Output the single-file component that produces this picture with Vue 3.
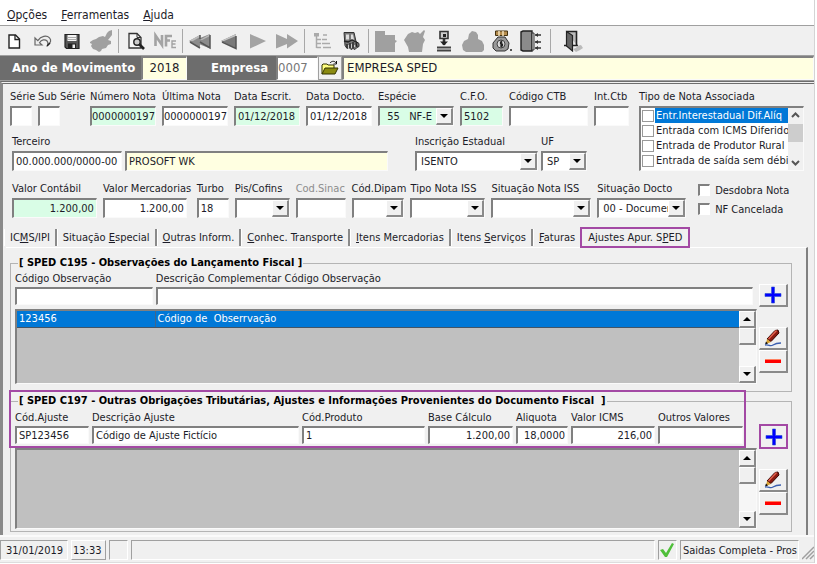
<script setup>
import { ref } from 'vue'

const menus = [['', 'O', 'pções'], ['', 'F', 'erramentas'], ['', 'A', 'juda']]

const tabs = [
  ['IC', 'M', 'S/IPI'],
  ['Situação ', 'E', 'special'],
  ['', 'O', 'utras Inform.'],
  ['', 'C', 'onhec. Transporte'],
  ['', 'I', 'tens Mercadorias'],
  ['Itens ', 'S', 'erviços'],
  ['', 'F', 'aturas'],
  ['Ajustes Apur. S', 'P', 'ED'],
]
const activeTab = ref(7)

const row1 = [
  { id: 'serie', label: 'Série', value: '' },
  { id: 'subserie', label: 'Sub Série', value: '', cls: 'gap-wide' },
  { id: 'numero', label: 'Número Nota', value: '0000000197', cls: 'green tight' },
  { id: 'ultima', label: 'Última Nota', value: '0000000197', cls: 'tight' },
  { id: 'escrit', label: 'Data Escrit.', value: '01/12/2018', cls: 'green' },
  { id: 'docto', label: 'Data Docto.', value: '01/12/2018' },
  { id: 'especie', label: 'Espécie', value: '\u00a055\u00a0\u00a0\u00a0NF-E', combo: true, cls: 'green' },
  { id: 'cfo', label: 'C.F.O.', value: '5102', cls: 'green' },
  { id: 'ctb', label: 'Código CTB', value: '' },
  { id: 'intctb', label: 'Int.Ctb', value: '' },
]
const row3 = [
  { id: 'contabil', label: 'Valor Contábil', value: '1.200,00', cls: 'green right' },
  { id: 'mercadorias', label: 'Valor Mercadorias', value: '1.200,00', cls: 'right gap-small' },
  { id: 'turbo', label: 'Turbo', value: '18' },
  { id: 'pis', label: 'Pis/Cofins', value: '', combo: true },
  { id: 'sinac', label: 'Cod.Sinac', value: '', cls: 'disabled' },
  { id: 'dipam', label: 'Cód.Dipam', value: '', combo: true },
  { id: 'tipoiss', label: 'Tipo Nota ISS', value: '', combo: true },
  { id: 'sitiss', label: 'Situação Nota ISS', value: '', combo: true },
  { id: 'sitdocto', label: 'Situação Docto', value: '00 - Documento', combo: true },
]
const noteTypes = ref([
  { text: 'Entr.Interestadual Dif.Alíq', on: false },
  { text: 'Entrada com ICMS Diferido', on: false },
  { text: 'Entrada de Produtor Rural', on: false },
  { text: 'Entrada de saída sem débi', on: false },
])
const adjust = [
  { id: 'codajuste', label: 'Cód.Ajuste', value: 'SP123456' },
  { id: 'descajuste', label: 'Descrição Ajuste', value: 'Código de Ajuste Fictício' },
  { id: 'codproduto', label: 'Cód.Produto', value: '1' },
  { id: 'base', label: 'Base Cálculo', value: '1.200,00', cls: 'right' },
  { id: 'aliquota', label: 'Aliquota', value: '18,0000', cls: 'right' },
  { id: 'icms', label: 'Valor ICMS', value: '216,00', cls: 'right' },
  { id: 'outros', label: 'Outros Valores', value: '', cls: 'right' },
]
</script>

<template>
  <div class="window">
    <nav class="menubar">
      <a v-for="m in menus" :key="m[1]" href="#">{{ m[0] }}<u>{{ m[1] }}</u>{{ m[2] }}</a>
    </nav>

    <div class="toolbar" role="toolbar" aria-label="Ferramentas">
      <button aria-label="Novo"><svg width="22" height="22" viewBox="0 0 22 22"><path d="M6 5h6.500l4 4v9H6z" fill="#fff" stroke="#222" stroke-width="1.400"/><path d="M12 5v4.500h4.500" fill="none" stroke="#222" stroke-width="1.300"/></svg></button>
      <button aria-label="Desfazer"><svg width="22" height="22" viewBox="0 0 22 22"><path d="M3 8v7h7l-2.500-2.300c2-3.200 5.600-3.700 7.600-1.700 1 1 1.100 2.400.4 4.500 3.500-2.600 4-5.700 2-7.700C14.600 5 9 6 5.800 10.600z" fill="#eee" stroke="#666" stroke-width="1.200"/><path d="M15 16l3-3" stroke="#222" stroke-width="1.300"/></svg></button>
      <button aria-label="Salvar"><svg width="22" height="22" viewBox="0 0 22 22"><path d="M4 4.500h14v14H5.500L4 17z" fill="#555" stroke="#222" stroke-width="1.200"/><path d="M6.500 5h9v6h-9z" fill="#f4f4f4"/><path d="M7 7.500h8M7 9.500h8" stroke="#aaa"/><path d="M7 13.500h8v5H7z" fill="#222"/><path d="M11.500 14.500h2.500v3.500h-2.500z" fill="#eee"/></svg></button>
      <button aria-label="Excluir"><svg width="22" height="22" viewBox="0 0 22 22"><path d="M0 12l3-2 3-1 3-2 4-1 2 1 2-4 2-2 3-1v5l-4 5 3 1v3l-3 1-2 3-4 1-1 2-2 1-3-2-3-1-2-3 1-2-2-1z" fill="#a0a0a0"/></svg></button>
      <i class="sep"></i>
      <button aria-label="Visualizar"><svg width="22" height="22" viewBox="0 0 22 22"><path d="M4 3.500h8l4 4V18H4z" fill="#f6f6f6" stroke="#333" stroke-width="1.300"/><path d="M12 3.500v4h4" fill="none" stroke="#333"/><circle cx="12" cy="12" r="3.200" fill="#ccc" stroke="#222" stroke-width="1.400"/><path d="M14 14l5 5" stroke="#222" stroke-width="2.600"/></svg></button>
      <button aria-label="Nota fiscal eletrônica"><svg width="22" height="22" viewBox="0 0 22 22"><path d="M1.500 16V5.500L8 15V5M12 16.500V6h6M12 10.500h4" fill="none" stroke="#a3a3a3" stroke-width="2.600"/><path d="M22 11h-4v6.500h4M18 14h3.500" fill="none" stroke="#a3a3a3" stroke-width="1.400"/></svg></button>
      <i class="sep"></i>
      <button aria-label="Primeiro"><svg width="22" height="22" viewBox="0 0 22 22"><path d="M0 11l11-6v3l10-4v14.500l-10-4V18z" fill="#8b8b8b"/><path d="M0 11l11-6v2L4 11zM11 10l10-6v2l-8 4z" fill="#bbb"/><path d="M1 12l10 6M11 12l10 6V5M11 5v4" fill="none" stroke="#555" stroke-width="1.500"/></svg></button>
      <button aria-label="Anterior"><svg width="22" height="22" viewBox="0 0 22 22"><path d="M3 11l15-7v14z" fill="#7a7a7a"/><path d="M3 11l15-7v2L6 11z" fill="#c4c4c4"/><path d="M4 12l14 6.500V6" fill="none" stroke="#555" stroke-width="1.500"/></svg></button>
      <button aria-label="Próximo"><svg width="22" height="22" viewBox="0 0 22 22"><path d="M3 4l16 7-16 7.500z" fill="#a3a3a3"/></svg></button>
      <button aria-label="Último"><svg width="22" height="22" viewBox="0 0 22 22"><path d="M0 4l11 5V4l11 7-11 7.500V14L0 18.500z" fill="#a3a3a3"/></svg></button>
      <i class="sep"></i>
      <button aria-label="Estrutura"><svg width="22" height="22" viewBox="0 0 22 22"><path d="M5.500 6v12M5.500 9.500H10M5.500 13.500H10M5.500 17.500H10M12 5h4M11 9.500h5M11 13.500h8M12 17.500h8" fill="none" stroke="#aaa" stroke-width="1.500"/><path d="M3 3h5v3.500H3z" fill="#aaa"/></svg></button>
      <button aria-label="Integração"><svg width="22" height="22" viewBox="0 0 22 22"><path d="M4 2.500h10l2 9 3 2v3l-2 1-2 2-2-1-2 1-2-2-2 1-2-3z" fill="#777" stroke="#333"/><path d="M6 4.500h3v5H6zM11 4.500h2l1 5h-3z" fill="#ddd"/><path d="M4 11l4 1 4-2 6 3M7 14v4M10 13v5M13 12v6M16 13l1 4" fill="none" stroke="#222" stroke-width="1.300"/><path d="M8.500 15v3M11.500 14v4M14.500 15v2" stroke="#ccc"/></svg></button>
      <i class="sep"></i>
      <button aria-label="Pasta"><svg width="22" height="22" viewBox="0 0 22 22"><path d="M0 1h10v4h10v5l2 1-2 2v9H0z" fill="#a0a0a0"/></svg></button>
      <button aria-label="Lançar"><svg width="22" height="22" viewBox="0 0 22 22"><path d="M0 10l4-6 4-2 3 1 3-1 2 2 4-4 1 1-2 6 2 3-2 4-1 8H5l-1-5z" fill="#a0a0a0"/></svg></button>
      <button aria-label="Carimbo"><svg width="22" height="22" viewBox="0 0 22 22"><path d="M7 1.500h8v7H7z" fill="#ccc" stroke="#333" stroke-width="1.600"/><path d="M10 4h3v3h-3z" fill="#222"/><path d="M11 9v6" stroke="#333" stroke-width="2.600"/><path d="M7 11.500h8l-4 4z" fill="#222"/><path d="M4 17.500h14M4 20.500h14" stroke="#444" stroke-width="1.800"/></svg></button>
      <button aria-label="Acumular"><svg width="22" height="22" viewBox="0 0 22 22"><path d="M0 15l2-4 4-2 1-5 3-3 4 1 2 3v4l4 2 2 4v5l-2 2H4l-3-2z" fill="#a0a0a0"/></svg></button>
      <button aria-label="Valores"><svg width="22" height="22" viewBox="0 0 22 22"><path d="M4.500 1h12v4.500h-12z" fill="#b58c4e" stroke="#443311"/><path d="M8 1v5M12 1v5" stroke="#f3e2bd" stroke-width="1.500"/><path d="M7 7h7l4 6-1 6-3 2H5l-3-3V13z" fill="#999" stroke="#333"/><circle cx="10" cy="14" r="4" fill="#ddd" stroke="#444"/><path d="M11.500 12H9.500v2h2v2h-2.500M10.300 10.500v7" fill="none" stroke="#222" stroke-width="1.200"/><path d="M19 20h2" stroke="#222" stroke-width="1.500"/></svg></button>
      <button aria-label="Livro"><svg width="22" height="22" viewBox="0 0 22 22"><path d="M1 2l2-1h9v20H3l-2-1z" fill="#8b8b8b" stroke="#222" stroke-width="1.400"/><path d="M12 3h2v17h-2z" fill="#ddd" stroke="#333"/><path d="M15 5h6M15 12h6M15 18h6" stroke="#333" stroke-width="1.500"/><path d="M18 3l-3 2 3 2zM18 10l-3 2 3 2zM18 16l-3 2 3 2z" fill="#333"/></svg></button>
      <i class="sep last"></i>
      <button aria-label="Sair"><svg width="22" height="22" viewBox="0 0 22 22"><path d="M4.500 1.500h10V15" fill="#bbb" stroke="#222" stroke-width="1.600"/><path d="M4.500 1.500l6 4V21l-6-5z" fill="#666" stroke="#222" stroke-width="1.200"/><path d="M2 15.500h3M11 15.500h5" stroke="#222" stroke-width="1.300"/><path d="M11 19c2-1 4-1 4-3l4-1 2 3-3 2-4 2z" fill="#bbb"/></svg></button>
    </div>

    <div class="period">
      <label class="caption" for="ano">Ano de Movimento</label>
      <input id="ano" class="box cream year" value="2018" />
      <label class="caption company" for="empresa">Empresa</label>
      <input id="empresa" class="box code" value="0007" />
      <button class="open" aria-label="Procurar empresa"><svg width="18" height="16" viewBox="0 0 18 16"><path d="M1 14V5l1-1h4l1 1h6v3" fill="#ffff80" stroke="#333300"/><path d="M1 14l3-6h13l-3 6z" fill="#8a8a10" stroke="#333300"/><path d="M9 3c2-2.500 5-2 6 0M15.500 1v3h-3" fill="none" stroke="#111"/></svg></button>
      <input class="box cream company-name" aria-label="Nome da empresa" value="EMPRESA SPED" />
    </div>

    <main class="panel">
      <section class="head">
        <div class="head-left">
          <div class="row r1">
            <div v-for="f in row1" :key="f.id" class="field" :class="f.cls">
              <label :for="f.id">{{ f.label }}</label>
              <div v-if="f.combo" class="combo box">
                <select :id="f.id"><option>{{ f.value }}</option></select>
                <span class="drop"></span>
              </div>
              <input v-else :id="f.id" class="box" :value="f.value" />
            </div>
          </div>
          <div class="row r2">
            <div class="field">
              <label for="terceiro">Terceiro</label>
              <input id="terceiro" class="box" value="00.000.000/0000-00" />
            </div>
            <div class="field gap-wide">
              <input class="box cream" aria-label="Nome do terceiro" value="PROSOFT WK" />
            </div>
            <div class="field">
              <label for="ie">Inscrição Estadual</label>
              <div class="combo box"><select id="ie"><option>ISENTO</option></select><span class="drop"></span></div>
            </div>
            <div class="field">
              <label for="uf">UF</label>
              <div class="combo box"><select id="uf"><option>SP</option></select><span class="drop"></span></div>
            </div>
          </div>
        </div>
        <div class="types">
          <span class="types-label">Tipo de Nota Associada</span>
          <div class="types-box box">
            <div class="types-list">
              <label v-for="(t, i) in noteTypes" :key="t.text" :class="{ sel: i === 0 }">
                <input v-model="t.on" type="checkbox" /><span>{{ t.text }}</span>
              </label>
            </div>
            <div class="thin-bar">
              <svg width="15" height="14" viewBox="0 0 15 14"><path d="M4 9l3.500-3.500L11 9" fill="none" stroke="#555" stroke-width="2"/></svg>
              <span class="thin-thumb"></span>
              <svg width="15" height="14" viewBox="0 0 15 14"><path d="M4 5l3.500 3.500L11 5" fill="none" stroke="#555" stroke-width="2"/></svg>
            </div>
          </div>
        </div>
      </section>

      <section class="values">
        <div class="row r3">
          <div v-for="f in row3" :key="f.id" class="field" :class="f.cls">
            <label :for="f.id">{{ f.label }}</label>
            <div v-if="f.combo" class="combo box">
              <select :id="f.id"><option>{{ f.value }}</option></select>
              <span class="drop"></span>
            </div>
            <input v-else :id="f.id" class="box" :value="f.value" :disabled="f.cls === 'disabled'" />
          </div>
        </div>
        <div class="checks">
          <label><input type="checkbox" />Desdobra Nota</label>
          <label><input type="checkbox" />NF Cancelada</label>
        </div>
      </section>

      <div class="tabs" role="tablist">
        <button
          v-for="(t, i) in tabs" :key="i" role="tab"
          :aria-selected="i === activeTab" :class="{ active: i === activeTab }"
          @click="activeTab = i"
        >{{ t[0] }}<u>{{ t[1] }}</u>{{ t[2] }}</button>
      </div>

      <div class="tab-page" role="tabpanel">
        <fieldset class="group g1">
          <legend>[ SPED C195 - Observações do Lançamento Fiscal ]</legend>
          <div class="work">
            <div class="entry e1">
              <div class="field">
                <label for="codobs">Código Observação</label>
                <input id="codobs" class="box" value="" />
              </div>
              <div class="field">
                <label for="descobs">Descrição Complementar Código Observação</label>
                <input id="descobs" class="box" value="" />
              </div>
            </div>
            <div class="list box">
              <div class="list-body">
                <table>
                  <tbody><tr><td class="c1">123456</td><td>Código de &nbsp;Obserrvação</td></tr></tbody>
                </table>
              </div>
              <div class="scroll"><span class="sb up"></span><span class="sb thumb"></span><span class="track"></span><span class="sb down"></span></div>
            </div>
          </div>
          <div class="actions">
            <button class="act" aria-label="Incluir observação"><svg width="18" height="18" viewBox="0 0 18 18"><path d="M7.500 1h3v6.500H17v3h-6.500V17h-3v-6.500H1v-3h6.500z" fill="#0000ff" stroke="#2a4fd0" stroke-width=".6"/></svg></button>
            <button class="act spaced" aria-label="Alterar observação"><svg width="20" height="18" viewBox="0 0 20 18"><path d="M4 10l8-8.500 3-.5 1 3-8 8.500z" fill="#8b1a10" stroke="#3a0804"/><path d="M5.500 10l8-8.500" stroke="#e2604e" stroke-width="1.500"/><path d="M4 10l4 3-5 2z" fill="#d9a030"/><path d="M3 12.500l-1 3 3-1z" fill="#111"/><path d="M2 16c4-1 5 2 8 0s4-2 8-2" fill="none" stroke="#3b5fb0" stroke-width="1.300"/></svg></button>
            <button class="act" aria-label="Excluir observação"><svg width="18" height="18" viewBox="0 0 18 18"><path d="M1 7h16v4H1z" fill="#f00"/><path d="M1 7h16v1H1z" fill="#ff8060"/></svg></button>
          </div>
        </fieldset>

        <fieldset class="group g2">
          <legend>[ SPED C197 - Outras Obrigações Tributárias, Ajustes e Informações Provenientes do Documento Fiscal &nbsp;]</legend>
          <div class="work">
            <div class="entry e2">
              <div v-for="f in adjust" :key="f.id" class="field" :class="f.cls">
                <label :for="f.id">{{ f.label }}</label>
                <input :id="f.id" class="box" :value="f.value" />
              </div>
              <div class="marker"></div>
            </div>
            <div class="list box tall">
              <div class="list-body"></div>
              <div class="scroll"><span class="sb up"></span><span class="sb thumb"></span><span class="track"></span><span class="sb down"></span></div>
            </div>
          </div>
          <div class="actions">
            <button class="act marked" aria-label="Incluir ajuste"><svg width="18" height="18" viewBox="0 0 18 18"><path d="M7.500 1h3v6.500H17v3h-6.500V17h-3v-6.500H1v-3h6.500z" fill="#0000ff" stroke="#2a4fd0" stroke-width=".6"/></svg></button>
            <button class="act spaced" aria-label="Alterar ajuste"><svg width="20" height="18" viewBox="0 0 20 18"><path d="M4 10l8-8.500 3-.5 1 3-8 8.500z" fill="#8b1a10" stroke="#3a0804"/><path d="M5.500 10l8-8.500" stroke="#e2604e" stroke-width="1.500"/><path d="M4 10l4 3-5 2z" fill="#d9a030"/><path d="M3 12.500l-1 3 3-1z" fill="#111"/><path d="M2 16c4-1 5 2 8 0s4-2 8-2" fill="none" stroke="#3b5fb0" stroke-width="1.300"/></svg></button>
            <button class="act" aria-label="Excluir ajuste"><svg width="18" height="18" viewBox="0 0 18 18"><path d="M1 7h16v4H1z" fill="#f00"/><path d="M1 7h16v1H1z" fill="#ff8060"/></svg></button>
          </div>
        </fieldset>
      </div>
    </main>

    <footer class="status">
      <span class="cell date">31/01/2019</span>
      <span class="cell time">13:33</span>
      <span class="cell blank"></span>
      <span class="cell message"></span>
      <span class="cell ok"><svg width="16" height="16" viewBox="0 0 16 16"><path d="M1 8l3-1 3 4 6-10 2 1-7 13H6z" fill="#4fbf3a"/></svg></span>
      <span class="cell routine">Saidas Completa - Pros</span>
      <svg class="grip" width="12" height="14" viewBox="0 0 12 14"><path d="M0 13L12 1M4 13l8-8M8 13l4-4" stroke="#a0a0a0" stroke-width="1.500"/></svg>
    </footer>
  </div>
</template>

<style>
body { background: #fff; }
</style>

<style scoped>
.window {
  margin-right: 2px;
  border-right: 1px solid #d4d4d4;
  background: #f0f0f0;
  color: #1c1c28;
  font-family: "DejaVu Sans Condensed", "Noto Sans", sans-serif;
  font-size: 11px;
  line-height: 14px;
  overflow: hidden;
}
.window *, .window *::after { box-sizing: border-box; }
input, select, button { font: inherit; color: inherit; margin: 0; border-radius: 0; }
button { background: none; border: 0; padding: 0; }
a { color: inherit; text-decoration: none; }

.menubar {
  display: flex; gap: 14px; padding: 5px 7px 0; height: 25px;
  background: #fff; font-size: 12px; line-height: 20px;
}
.toolbar {
  display: flex; align-items: center; height: 31px;
  border-top: 1px solid #a0a0a0; border-bottom: 1px solid #a0a0a0;
}
.toolbar button { width: 28px; height: 24px; margin-right: 1px; display: flex; align-items: center; justify-content: center; }
.toolbar svg { display: block; flex: none; }
.sep { width: 1px; height: 24px; margin: 0 3px 0 2px; background: #a8a8a8; }
.sep.last { margin: 0 8px 0 4px; }

.box {
  background: #fff;
  border: 1px solid #fafafa; border-top: 2px solid #808080; border-left: 2px solid #808080;
  border-radius: 0;
}
.period {
  display: flex; align-items: stretch; height: 25px; padding-left: 12px;
  background: #6d6d6d; border-bottom: 1px solid #a0a0a0;
}
.caption { color: #fff; font-weight: bold; font-size: 13px; line-height: 24px; width: 129px; white-space: nowrap; }
.caption.company { width: 65px; margin-left: 24px; }
.period .box { font-size: 13px; min-width: 0; padding: 0 0 2px; }
.year { width: 46px; text-align: center; }
.code { width: 42px; color: #777; }
.open { width: 24px; background: #f0f0f0; border: 1px solid #a0a0a0; display: flex; align-items: center; justify-content: center; }
.period .company-name { flex: 1; padding-left: 3px; }
.cream { background: #ffffe1; }

.panel { border-left: 3px solid #8a8a8a; border-top: 3px double #6d6d6d; padding-left: 7px; }
.head { display: flex; gap: 10px; padding: 6px 10px 0 0; }
.head-left { flex: 619 1 0; min-width: 0; }
.row, .entry { display: grid; column-gap: 6px; align-items: end; }
.r1 { grid-template-columns: 22fr 46fr 66fr 66fr 66fr 66fr 76fr 43fr 79fr 35fr; }
.r2 { grid-template-columns: 110fr 287fr 123fr 46fr 39fr; margin: 9px 0 0 2px; column-gap: 3px; }
.field { display: flex; flex-direction: column; min-width: 0; }
.field > label { white-space: nowrap; height: 16px; line-height: 14px; }
.field .box { width: 100%; height: 20px; padding: 0 0 0 2px; }
.field .combo, .field.tight .box { padding: 0; }
.field.green .box { background: #d9fde6; }
.field.right input { text-align: right; padding-right: 2px; }
.field.disabled label { color: #8c8c8c; }
.gap-wide { padding-right: 24px; }
.gap-small { padding-right: 4px; }
.combo { display: flex; }
.combo select {
  flex: 1; min-width: 0; appearance: none; border: 0; background: transparent;
  padding: 0 0 0 4px; outline: 0; overflow: hidden;
}
.drop, .sb {
  flex: none; background: #f0f0f0; display: flex; align-items: center; justify-content: center;
  border: 1px solid #fff; border-right: 2px solid #8a8a8a; border-bottom: 2px solid #8a8a8a;
}
.drop { width: 17px; }
.drop::after, .sb.down::after { content: ""; border: 4px solid transparent; border-top-color: #000; border-bottom: 0; }
.sb.up::after { content: ""; border: 4px solid transparent; border-bottom-color: #000; border-top: 0; }

.types { flex: 165 1 0; min-width: 0; }
.types-label { display: block; height: 16px; white-space: nowrap; }
.types-box { display: flex; height: 65px; }
.types-list { flex: 1; min-width: 0; overflow: hidden; }
.types-list label { display: flex; height: 15px; line-height: 15px; white-space: nowrap; }
.types-list span { flex: 1; padding-left: 1px; overflow: hidden; }
.types-list .sel span { background: #0078d7; color: #fff; }
.types-list input, .checks input { appearance: none; flex: none; width: 12px; height: 12px; background: #fff; }
.types-list input { border: 1px solid #999; margin: 2px 1px 0 1px; }
.thin-bar { width: 15px; display: flex; flex-direction: column; justify-content: space-between; background: #f0f0f0; }
.thin-bar svg { display: block; }
.thin-thumb { height: 18px; background: #cdcdcd; margin-bottom: 12px; }

.values { display: flex; padding: 10px 20px 0 2px; gap: 12px; }
.r3 { flex: 675 1 0; min-width: 0; grid-template-columns: 85fr 88fr 32fr 55fr 50fr 53fr 75fr 100fr 89fr; }
.checks { flex: 96 1 0; display: flex; flex-direction: column; gap: 4px; padding-top: 3px; }
.checks label { display: flex; gap: 5px; height: 15px; white-space: nowrap; }
.checks input { border: 1px solid #fff; border-top: 2px solid #808080; border-left: 2px solid #808080; }

.tabs { display: flex; height: 29px; padding-top: 11px; margin-left: -6px; }
.tabs button { height: 17px; padding: 0 5px; border-right: 2px solid #8a8a8a; border-left: 1px solid #fff; white-space: nowrap; line-height: 15px; }
.tabs button:nth-last-child(2) { border-right: 0; }
.tabs button.active { border: 0; outline: 2px solid #a349a4; margin-left: 2px; padding: 0 6px; }
.tab-page {
  border-top: 1px solid #fff; border-right: 2px solid #808080; margin-right: 6px; margin-left: -4px;
  padding: 7px 14px 3px 4px; display: flex; flex-direction: column; gap: 1px;
}
.group {
  margin: 0; padding: 0 3px 0 4px; border: 1px solid #b4b4b4; min-width: 0;
  display: flex; gap: 2px;
}
.group legend { font-weight: bold; color: #000; padding: 0 1px; margin-left: 3px; white-space: nowrap; height: 16px; line-height: 15px; }
.g1 { padding-bottom: 7px; }
.g2 { padding-bottom: 2px; }
.work { flex: 1; min-width: 0; }
.entry { position: relative; padding-top: 1px; column-gap: 3px; }
.entry .box { height: 18px; }
.entry .field > label { height: 15px; }
.e1 { grid-template-columns: 138fr 598fr; margin-right: 4px; }
.e2 { grid-template-columns: 74fr 207fr 123fr 85fr 52fr 84fr 85fr; margin-right: 14px; padding-top: 2px; }
.marker { position: absolute; inset: -19px -3px -4px -6px; border: 2px solid #a349a4; pointer-events: none; }
.list { display: flex; height: 75px; margin-top: 4px; background: #c0c0c0; }
.list.tall { height: 81px; }
.list-body { flex: 1; min-width: 0; }
table { width: 100%; border-collapse: collapse; background: #0078d7; color: #fff; }
td { height: 16px; padding: 0 2px; line-height: 14px; border-bottom: 1px solid #456; }
td.c1 { width: 138px; border-right: 1px solid #468; }
.scroll { width: 17px; display: flex; flex-direction: column; background: #f6f6f6; }
.sb { height: 17px; }
.track { flex: 1; }
.actions { width: 29px; padding-top: 13px; }
.g2 .actions { padding-top: 15px; }
.act {
  display: flex; width: 29px; height: 23px; align-items: center; justify-content: center;
  border: 1px solid #fff; border-right: 2px solid #8a8a8a; border-bottom: 2px solid #8a8a8a;
}
.act.spaced { margin-top: 20px; }
.act.marked { border: 2px solid #a349a4; height: 25px; }

.status { display: flex; gap: 3px; height: 28px; padding: 3px 0 2px; border-top: 2px solid #fafafa; border-bottom: 1px solid #ddd; }
.cell { border: 1px solid #fff; border-top-color: #a0a0a0; border-left-color: #a0a0a0; line-height: 20px; white-space: nowrap; overflow: hidden; }
.date { width: 68px; padding-left: 5px; }
.time { width: 35px; padding-left: 1px; border-color: #fff #a0a0a0 #a0a0a0 #fff; }
.blank { width: 19px; }
.message { flex: 1; }
.ok { width: 19px; display: flex; align-items: center; justify-content: center; }
.routine { padding: 0 1px 0 2px; }
.grip { align-self: flex-end; }
</style>
